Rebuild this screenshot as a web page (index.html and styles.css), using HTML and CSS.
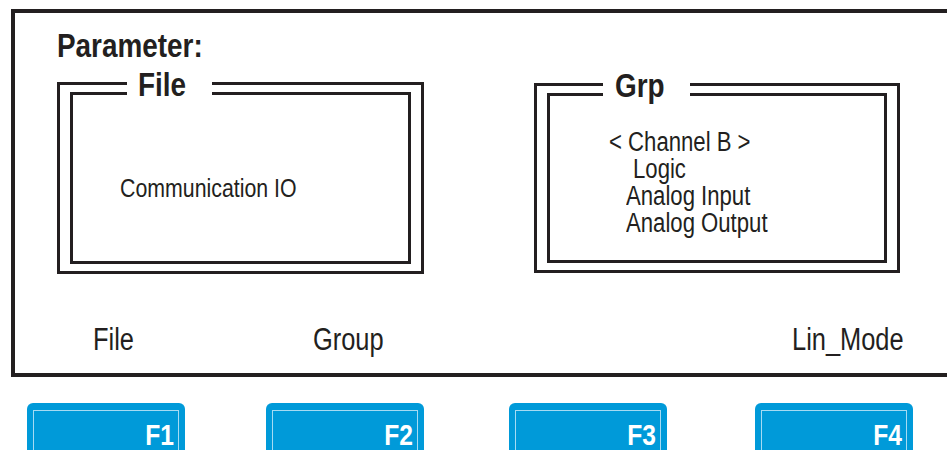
FILE: index.html
```html
<!DOCTYPE html>
<html>
<head>
<meta charset="utf-8">
<link rel="stylesheet" href="styles.css">
</head>
<body>
<div class="screen">
  <div class="param"><span class="cn">Parameter:</span></div>
  <div class="boxes">
    <div class="box box-file">
      <span class="box-title"><span class="cn">File</span></span>
      <div class="box-inner">
        <div class="file-item"><span class="cn">Communication IO</span></div>
      </div>
    </div>
    <div class="box box-grp">
      <span class="box-title"><span class="cn">Grp</span></span>
      <div class="box-inner grp-inner">
        <div class="grp-line indent-a"><span class="cn">&lt; Channel B &gt;</span></div>
        <div class="grp-line indent-b"><span class="cn">Logic</span></div>
        <div class="grp-line indent-c"><span class="cn">Analog Input</span></div>
        <div class="grp-line indent-c"><span class="cn">Analog Output</span></div>
      </div>
    </div>
  </div>
  <div class="labels">
    <span class="label"><span class="cn">File</span></span>
    <span class="label"><span class="cn">Group</span></span>
    <span class="label"><span class="cn">Lin_Mode</span></span>
  </div>
</div>
<div class="keys">
  <div class="key"><div class="key-inner"><span class="cn cn-r">F1</span></div></div>
  <div class="key"><div class="key-inner"><span class="cn cn-r">F2</span></div></div>
  <div class="key"><div class="key-inner"><span class="cn cn-r">F3</span></div></div>
  <div class="key"><div class="key-inner"><span class="cn cn-r">F4</span></div></div>
</div>
</body>
</html>
```

FILE: styles.css
```css
html, body {
  margin: 0;
  padding: 0;
  overflow: hidden;
  background: #ffffff;
}
body {
  width: 947px;
  height: 450px;
  font-family: "Liberation Sans", Arial, sans-serif;
  color: #231f20;
}
.cn {
  display: inline-block;
  white-space: nowrap;
  transform: scaleX(0.82);
  transform-origin: left center;
}
.cn-r {
  transform-origin: right center;
}
.screen {
  margin: 9px 0 0 11px;
  width: 932px;
  height: 345px;
  padding-top: 15px;
  border: 4px solid #231f20;
  border-right: none;
}
.param {
  padding-left: 42px;
  font-size: 34px;
  line-height: 34px;
  font-weight: bold;
}
.boxes {
  display: flex;
  gap: 110px;
  margin-top: 20px;
  padding-left: 42px;
}
.box {
  position: relative;
  box-sizing: border-box;
  width: 367px;
  height: 192px;
  border: 3px solid #231f20;
  padding: 7px 10px;
}
.box-grp {
  width: 366px;
  height: 190px;
  margin-top: 1px;
}
.box-title {
  position: absolute;
  top: -18px;
  left: 67px;
  box-sizing: border-box;
  width: 85px;
  height: 34px;
  background: #ffffff;
  padding-left: 11px;
  font-size: 34px;
  line-height: 34px;
  font-weight: bold;
  overflow: visible;
}
.box-grp .box-title {
  left: 66px;
  width: 87px;
  padding-left: 12px;
}
.box-inner {
  box-sizing: border-box;
  height: 100%;
  border: 3px solid #231f20;
}
.file-item {
  padding: 80px 0 0 47px;
  font-size: 26px;
  line-height: 26px;
}
.grp-inner {
  padding-top: 33px;
}
.grp-line {
  font-size: 27px;
  line-height: 27px;
}
.indent-a { padding-left: 59px; }
.indent-b { padding-left: 83px; }
.indent-c { padding-left: 76px; }
.labels {
  display: grid;
  grid-template-columns: 220px 479px 1fr;
  margin-top: 50px;
  padding-left: 78px;
  font-size: 31px;
  line-height: 31px;
}
.keys {
  display: grid;
  grid-template-columns: 239px 243px 246px 158px;
  margin-top: 26px;
  padding-left: 27px;
}
.key {
  box-sizing: border-box;
  width: 158px;
  height: 47px;
  background: #009ad9;
  border-radius: 6px 6px 0 0;
  padding: 7px 6px 0;
}
.key-inner {
  box-sizing: border-box;
  height: 100%;
  border: 1px solid #a6dbf3;
  border-bottom: none;
  padding: 9px 4px 0 0;
  text-align: right;
  color: #ffffff;
  font-size: 30px;
  line-height: 30px;
  font-weight: bold;
}
```
